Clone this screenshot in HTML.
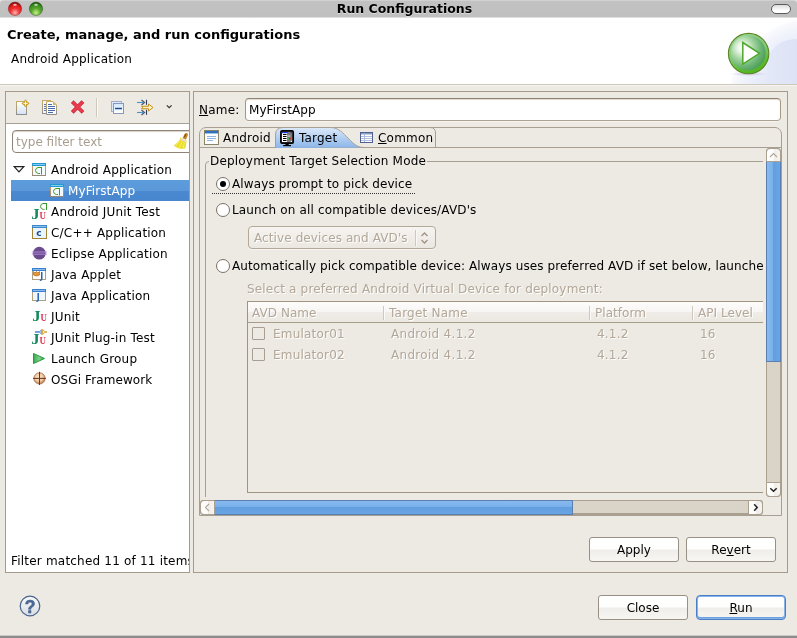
<!DOCTYPE html>
<html><head><meta charset="utf-8"><title>Run Configurations</title>
<style>
html,body{margin:0;padding:0;}
body{width:797px;height:638px;overflow:hidden;background:#ede9e3;font-family:"DejaVu Sans","Liberation Sans",sans-serif;font-size:12px;color:#000;position:relative;letter-spacing:0.2px;}
.abs{position:absolute;}
.t{position:absolute;white-space:nowrap;line-height:16px;height:16px;margin-top:1px;}
#titlebar{left:0;top:0;width:797px;height:17px;background:linear-gradient(#d8d8d8 0,#c2c2c2 1.500px,#c0c0c0 100%);border-bottom:1px solid #dedede;}
#title{left:6px;width:797px;top:0;text-align:center;text-shadow:0 1px 0 #dcdcdc;font-weight:bold;font-size:12.5px;letter-spacing:0;}
#header{left:0;top:18px;width:797px;height:66px;background:#fff;overflow:hidden;}
#hsep{left:0;top:84px;width:797px;height:1px;background:#cfc8ba;border-bottom:1px solid #f6f4f1;}
.panel{position:absolute;border:1px solid #a69b8a;box-sizing:border-box;}
.btn{position:absolute;box-sizing:border-box;border:1px solid #988f85;border-radius:3px;background:linear-gradient(#ffffff 0,#fefefd 46%,#f0eeea 54%,#f7f6f3 100%);letter-spacing:0;text-align:center;line-height:23px;height:25px;padding-top:1px;}
.row{position:absolute;left:11px;width:178px;height:21px;}
.row .t{top:2px;}
u{text-decoration:underline;}
.dis{color:#b2a798;}
.radio{width:14px;height:14px;box-sizing:border-box;border:1px solid #7a7066;border-radius:50%;background:#fff;}
.cb{width:13px;height:13px;box-sizing:border-box;border:1px solid #a89f94;background:#ede9e3;border-radius:1px;}
.vsep{width:1px;height:14px;background:#cfc8bd;border-right:1px solid #fbfaf8;}
.sbtn{box-sizing:border-box;border:1px solid #aba08f;background:linear-gradient(90deg,#fff 0,#fcfbfa 50%,#f0ede9 55%,#f6f4f1 100%);}
#wrap{position:absolute;left:0;top:0;width:797px;height:638px;will-change:transform;}
</style></head><body><div id="wrap">
<!-- title bar -->
<div id="titlebar" class="abs"></div>
<svg class="abs" style="left:0;top:0" width="50" height="18" viewBox="0 0 50 18"><defs>
<radialGradient id="rb" cx=".5" cy=".8" r=".75"><stop offset="0" stop-color="#ffb4b4"/><stop offset=".45" stop-color="#f03434"/><stop offset=".8" stop-color="#d81818"/><stop offset="1" stop-color="#7a0c0c"/></radialGradient>
<radialGradient id="gb" cx=".5" cy=".8" r=".75"><stop offset="0" stop-color="#c8f088"/><stop offset=".45" stop-color="#5aa830"/><stop offset=".8" stop-color="#3a8a20"/><stop offset="1" stop-color="#1c5a0c"/></radialGradient>
<radialGradient id="hl" cx=".5" cy=".5" r=".5"><stop offset="0" stop-color="#fff" stop-opacity=".95"/><stop offset="1" stop-color="#fff" stop-opacity="0"/></radialGradient></defs>
<path d="M0 0h4q-4 0-4 4z" fill="#e4e4e4"/>
<circle cx="15" cy="8.800" r="6.700" fill="url(#rb)" stroke="#7a1010" stroke-opacity=".55" stroke-width=".7"/><ellipse cx="15" cy="4.800" rx="2.600" ry="1.600" fill="url(#hl)"/>
<circle cx="36" cy="8.800" r="6.700" fill="url(#gb)" stroke="#1c4a0c" stroke-opacity=".55" stroke-width=".7"/><ellipse cx="36" cy="4.800" rx="2.600" ry="1.600" fill="url(#hl)"/>
</svg>
<div class="abs" style="left:771px;top:4px;width:20px;height:10px;box-sizing:border-box;border:1px solid #5a5a5a;border-radius:5px;background:linear-gradient(#dcdcdc,#fff 70%);"></div><svg class="abs" style="left:793px;top:0" width="4" height="4" viewBox="0 0 4 4"><path d="M4 0h-4q4 0 4 4z" fill="#e4e4e4"/></svg>
<div id="title" class="t">Run Configurations</div>
<!-- header -->
<div id="header" class="abs">
<svg class="abs" style="left:697px;top:0" width="100" height="66" viewBox="697 18 100 66">
<defs><radialGradient id="hb" gradientUnits="userSpaceOnUse" cx="820" cy="110" r="94"><stop offset="0" stop-color="#e0e6f7"/><stop offset="0.62" stop-color="#e3e8f8"/><stop offset="0.85" stop-color="#eef1fb"/><stop offset="0.97" stop-color="#f8f9fd"/><stop offset="1" stop-color="#fdfdff"/></radialGradient>
<linearGradient id="hb2" gradientUnits="userSpaceOnUse" x1="764" y1="0" x2="797" y2="0"><stop offset="0" stop-color="#e4e9f8"/><stop offset="1" stop-color="#dde3f5"/></linearGradient></defs>
<circle cx="820" cy="110" r="94" fill="url(#hb)"/>
<path d="M797 39L795 39Q769 41 767 66L766 85L797 85Z" fill="url(#hb2)"/>
</svg>
</div>
<svg class="abs" style="left:724px;top:30px" width="50" height="50" viewBox="0 0 50 50">
<defs>
<linearGradient id="rgo" x1="0.2" y1="0" x2="0.6" y2="1"><stop offset="0" stop-color="#9ad890"/><stop offset="0.55" stop-color="#7cc870"/><stop offset="0.8" stop-color="#5cbc30"/><stop offset="1" stop-color="#52b41c"/></linearGradient>
<radialGradient id="rgi" cx="0.33" cy="0.36" r="0.72"><stop offset="0" stop-color="#ffffff"/><stop offset="0.18" stop-color="#eaf6e8"/><stop offset="0.45" stop-color="#a6d6a2"/><stop offset="0.75" stop-color="#6ab474"/><stop offset="1" stop-color="#4e9c58"/></radialGradient>
<radialGradient id="rsh" cx=".5" cy=".5" r=".5"><stop offset="0" stop-color="#a8a0b8" stop-opacity=".6"/><stop offset="1" stop-color="#c8c8e0" stop-opacity="0"/></radialGradient>
</defs>
<ellipse cx="24.500" cy="44" rx="20" ry="2.200" fill="url(#rsh)"/>
<circle cx="24.600" cy="23.600" r="20.200" fill="url(#rgo)" stroke="#5f8428" stroke-width="1.100"/>
<circle cx="24.200" cy="22.800" r="17.400" fill="url(#rgi)"/>
<path d="M18.800 12.500L35.400 23.300L18.800 34.200Z" fill="#fff" stroke="#4ea82c" stroke-width="1.500" stroke-linejoin="miter"/>
</svg>
<div id="hsep" class="abs"></div>
<div class="t" style="left:7px;top:26px;font-weight:bold;font-size:13px;letter-spacing:0">Create, manage, and run configurations</div>
<div class="t" style="left:11px;top:50px;">Android Application</div>
<!-- panels -->
<div class="panel" style="left:5px;top:91px;width:185px;height:482px;background:#fff;"></div>
<div class="panel" style="left:193px;top:91px;width:595px;height:482px;"></div>
<!-- left toolbar -->
<div class="abs" style="left:6px;top:92px;width:183px;height:31px;background:#ede9e3;border-bottom:1px solid #a89f94;"></div>
<div class="abs" style="left:96px;top:98px;width:1px;height:19px;background:#cfc8bd;"></div>
<div class="abs" style="left:97px;top:98px;width:1px;height:19px;background:#fbfaf8;"></div>
<svg class="abs" style="left:10px;top:94px" width="50" height="26" viewBox="10 94 50 26"><!-- new + copy -->
<defs><linearGradient id="pg" x1="0" y1="0" x2="0" y2="1"><stop offset="0" stop-color="#ffffff"/><stop offset="1" stop-color="#d4e2f6"/></linearGradient>
<linearGradient id="pb" x1="0" y1="0" x2="0" y2="1"><stop offset="0" stop-color="#c8ac64"/><stop offset="1" stop-color="#8e8e8e"/></linearGradient></defs>
<rect x="16.500" y="101.500" width="10" height="13" fill="url(#pg)" stroke="url(#pb)"/>
<path d="M25.500 99.800L27 102 29.200 103.400 27 104.900 25.500 107 24 104.900 21.800 103.400 24 102Z" fill="#d0a828" stroke="#b88c14" stroke-width=".6"/>
<path d="M25.500 101.200v4.400M23.300 103.400h4.400" stroke="#fff8d8" stroke-width="1"/>
<rect x="42.500" y="100.500" width="8" height="13" fill="#f4f6fb" stroke="url(#pb)"/>
<path d="M44 104.500h3M44 106.500h3M44 108.500h3M44 110.500h3" stroke="#5a78b0" stroke-width="1"/>
<path d="M46.500 101.500h6.500l3.500 3.500v9.500h-10z" fill="#fbfcfe" stroke="url(#pb)"/>
<path d="M53 101.500v3.500h3.500z" fill="#d8b460"/>
<path d="M48 104.500h4M48 106.500h7M48 108.500h7M48 110.500h7M48 112.500h5" stroke="#4a6aa8" stroke-width="1"/>
</svg>
<svg class="abs" style="left:68px;top:97px" width="20" height="20" viewBox="68 97 20 20"><!-- delete -->
<path d="M73.600 103l8 8M81.600 103l-8 8" stroke="#c8202e" stroke-width="3.800" stroke-linecap="square"/>
<path d="M73.600 103l8 8M81.600 103l-8 8" stroke="#ea3c4e" stroke-width="2.500" stroke-linecap="square"/></svg>
<svg class="abs" style="left:106px;top:94px" width="70" height="26" viewBox="106 94 70 26"><!-- collapse, filter, chevron -->
<defs><linearGradient id="cg" x1="0" y1="0" x2="0" y2="1"><stop offset="0" stop-color="#d2e8fb"/><stop offset="1" stop-color="#ffffff"/></linearGradient></defs>
<rect x="111.500" y="101.500" width="10" height="10" fill="#dbeafb" stroke="#a4aecc"/>
<rect x="113.500" y="103.500" width="10" height="10" fill="url(#cg)" stroke="#8c96b8"/>
<path d="M115 108.500h7" stroke="#1c4a8c" stroke-width="1.500"/>
<path d="M137 102.500h6" stroke="#4a94cc" stroke-width="1.100"/><path d="M141.500 100l3 2.500-3 2.500" stroke="#4a5668" stroke-width="1.200" fill="none"/><path d="M146.500 99.800v5" stroke="#2c3c5c" stroke-width="1.100"/>
<path d="M137 112.500h6" stroke="#4a94cc" stroke-width="1.100"/><path d="M141.500 110l3 2.500-3 2.500" stroke="#4a5668" stroke-width="1.200" fill="none"/><path d="M146.500 109.800v5" stroke="#2c3c5c" stroke-width="1.100"/>
<path d="M141.500 106.300h7v-2.300l4.500 3.500-4.500 3.500v-2.300h-7l1.500-1.200z" fill="#fff4c8" stroke="#c8901c" stroke-width="1" stroke-linejoin="round"/>
<path d="M166.800 105.400l2.400 2.300 2.400-2.300" stroke="#333" stroke-width="1.200" fill="none"/>
</svg>
<!-- filter box -->
<div class="abs" style="left:11px;top:129px;width:178px;height:25px;overflow:hidden;">
<div class="abs" style="left:1px;top:1px;width:190px;height:23px;box-sizing:border-box;border:1px solid #8f8475;border-radius:4px;background:#fff;box-shadow:inset 0 1px 1px #d8d2ca;"></div>
<div class="t" style="left:5px;top:4px;color:#a89e90;letter-spacing:0">type filter text</div>
<svg class="abs" style="left:155px;top:-3px" width="28" height="30" viewBox="166 126 28 30"><path d="M184.400 134.200Q185.800 132.400 187.400 133.300Q188.400 134.300 187.800 135.600L185.900 139.800L182.500 138.200Z" fill="#c88a2a"/><path d="M185.600 134.500l-1 2.200" stroke="#7a4c10" stroke-width="1.100" stroke-linecap="round"/><path d="M180 137.200L181.200 138.600L186 140.800L187 140.400L186.400 142.200L185.400 148.200Q182 149.400 178.400 148.200Q175.600 147 173.800 145.400Q177.500 143 180 139.600Z" fill="#eade2c"/><path d="M179.500 141l-3.500 4M182 142l-2.500 5.500M184.300 142.800l-1.300 5.500" stroke="#f8f27a" stroke-width=".8" fill="none"/><path d="M180.600 139.400L186.200 141.900" stroke="#e8d6e4" stroke-width="1.500"/></svg>
</div>
<!-- tree -->
<div class="row" style="top:159px"><svg class="abs" style="left:1px;top:6px" width="14" height="9" viewBox="0 0 14 9"><path d="M2.200 1.600h9.600l-4.800 5.200z" fill="#fff" stroke="#222" stroke-width="1.200" stroke-linejoin="miter"/></svg>
<svg class="abs" style="left:21px;top:4px" width="14" height="13" viewBox="0 0 14 13"><use href="#andicon"/></svg><div class="t" style="left:40px">Android Application</div></div>
<div class="row" style="top:180px;background:linear-gradient(#5c9bdc 0,#5a98da 50%,#4a88cf 55%,#4886ce 100%);color:#fff"><svg class="abs" style="left:39px;top:4px" width="14" height="13" viewBox="0 0 14 13"><use href="#andicon"/></svg><div class="t" style="left:57px;letter-spacing:0.1px">MyFirstApp</div></div>
<div class="row" style="top:201px"><svg class="abs" style="left:20px;top:0px" width="18" height="21" viewBox="0 0 18 21"><use href="#juicon" y="-2.200"/><path d="M15.500 2v7M15.500 2.500h-3.500q-2.500 .5-2.500 3t3 3h1" fill="none" stroke="#3a9a30" stroke-width="1"/></svg><div class="t" style="left:40px">Android JUnit Test</div></div>
<div class="row" style="top:222px"><svg class="abs" style="left:21px;top:3px" width="15" height="14" viewBox="0 0 15 14"><rect x=".5" y=".5" width="14" height="13" fill="#eaf4fd" stroke="#a08438"/><rect x="0" y="0" width="15" height="3" fill="#3a88d0"/><rect x="1" y="1" width="13" height="1" fill="#8cc0ec"/><text x="4.300" y="11.200" font-size="9" font-weight="bold" fill="#1c4a8c" font-family="DejaVu Sans,sans-serif" letter-spacing="0">c</text></svg><div class="t" style="left:40px">C/C++ Application</div></div>
<div class="row" style="top:243px"><svg class="abs" style="left:20px;top:3px" width="17" height="15" viewBox="-1 0 17 15"><circle cx="7.300" cy="7.200" r="6.400" fill="#6a4a8c"/><path d="M-.2 6h15.200M-.2 8.200h15.200" stroke="#b690e0" stroke-width=".9"/></svg><div class="t" style="left:40px">Eclipse Application</div></div>
<div class="row" style="top:264px"><svg class="abs" style="left:21px;top:4px" width="15" height="13" viewBox="0 0 15 13"><rect x=".5" y=".5" width="13" height="11" fill="#fff" stroke="#b0a080"/><rect x="0" y="0" width="14" height="3" fill="#3a80d0"/><rect x="1" y="1" width="12" height="1" fill="#8cb8ec"/><path d="M1.500 3.500l1.500 1.500 1.500-1.500 1.500 1.500 1.500-1.500v3.500q-3 2-6 0z" fill="#e89838" stroke="#a05c10" stroke-width=".6"/><text x="8.200" y="10.500" font-size="8" font-weight="bold" fill="#2a64b8" font-family="DejaVu Sans,sans-serif" letter-spacing="0">J</text></svg><div class="t" style="left:40px">Java Applet</div></div>
<div class="row" style="top:285px"><svg class="abs" style="left:21px;top:4px" width="15" height="13" viewBox="0 0 15 13"><rect x=".5" y=".5" width="13" height="11" fill="#f0f6fd" stroke="#b0a080"/><rect x="0" y="0" width="14" height="3" fill="#3a80d0"/><rect x="1" y="1" width="12" height="1" fill="#8cb8ec"/><text x="4.800" y="10.500" font-size="8" font-weight="bold" fill="#2a64b8" font-family="DejaVu Sans,sans-serif" letter-spacing="0">J</text></svg><div class="t" style="left:40px">Java Application</div></div>
<div class="row" style="top:306px"><svg class="abs" style="left:20px;top:0px" width="18" height="21" viewBox="0 0 18 21"><use href="#juicon" x="1" y="-5"/></svg><div class="t" style="left:40px">JUnit</div></div>
<div class="row" style="top:327px"><svg class="abs" style="left:20px;top:0px" width="18" height="21" viewBox="0 0 18 21"><use href="#juicon" y="-3.100"/><path d="M4 5h4.500" stroke="#3a6ad0" stroke-width="1.300"/><path d="M10.500 2.500v5l-2.500-2.500z" fill="#a8c4e8" stroke="#5a84c8" stroke-width=".6"/><path d="M11.500 2.500l3 2.500-3 2.500z" fill="#fff0b0" stroke="#d09820" stroke-width=".8"/><rect x="14.500" y="4.300" width="1.300" height="1.500" fill="#b87818"/></svg><div class="t" style="left:40px">JUnit Plug-in Test</div></div>
<div class="row" style="top:348px"><svg class="abs" style="left:21px;top:4px" width="15" height="14" viewBox="0 0 15 14"><defs><linearGradient id="lg" x1="0" x2="1"><stop offset="0" stop-color="#3aa850"/><stop offset=".5" stop-color="#7cd088"/><stop offset="1" stop-color="#3aa850"/></linearGradient></defs><path d="M1.500 1.500l11 5-11 5z" fill="url(#lg)" stroke="#2a9a40" stroke-width="1" stroke-linejoin="round"/></svg><div class="t" style="left:40px">Launch Group</div></div>
<div class="row" style="top:369px"><svg class="abs" style="left:21px;top:2px" width="15" height="15" viewBox="0 0 15 15"><defs><radialGradient id="og" cx=".45" cy=".4" r=".6"><stop offset="0" stop-color="#fde8d0"/><stop offset=".6" stop-color="#f0c8a0"/><stop offset="1" stop-color="#b87850"/></radialGradient></defs><circle cx="7.500" cy="7.400" r="5.600" fill="url(#og)" stroke="#a86840" stroke-width=".8"/><path d="M7.500 .8v13.200M1 7.400h13" stroke="#6a3420" stroke-width="1"/></svg><div class="t" style="left:40px;letter-spacing:0.1px">OSGi Framework</div></div>
<div class="abs" style="left:6px;top:550px;width:183px;height:20px;overflow:hidden"><div class="t" style="left:5px;top:2px">Filter matched 11 of 11 items</div></div>
<svg width="0" height="0" style="position:absolute"><defs>
<linearGradient id="ab" x1="0" y1="0" x2="0" y2="1"><stop offset="0" stop-color="#d8a060"/><stop offset="1" stop-color="#988878"/></linearGradient>
<g id="andicon"><rect x=".5" y=".5" width="13" height="12" fill="#f2fbfe" stroke="url(#ab)"/><rect x="0" y="0" width="14" height="3" fill="#2498d2"/><rect x="1" y="1" width="12" height="1" fill="#80ccee"/><path d="M9.500 4v7.500M9.500 4.500h-3.500q-2.500 .5-2.500 3t3 3h1.500" fill="none" stroke="#4a9a20" stroke-width="1"/></g>
<g id="juicon"><text x="0.300" y="20" font-family="Liberation Serif,serif" font-weight="bold" font-size="14.500" textLength="8.600" lengthAdjust="spacingAndGlyphs" fill="#168a5c">J</text><text x="8.500" y="20.300" font-family="Liberation Serif,serif" font-weight="bold" font-size="11" textLength="6.600" lengthAdjust="spacingAndGlyphs" fill="#e03450">U</text></g>
</defs></svg>
<!-- RIGHTPANEL -->
<div class="t" style="left:199px;top:101px"><u>N</u>ame:</div>
<div class="abs" style="left:245px;top:98px;width:536px;height:23px;box-sizing:border-box;border:1px solid;border-color:#8f8273 #a59986 #ada291 #a59986;border-radius:4px;background:#fff;box-shadow:inset 0 1px 1px #e0dbd4,0 1px 0 #f6f4f1;"></div>
<div class="t" style="left:249px;top:101px;letter-spacing:0.05px">MyFirstApp</div>
<!-- tab folder -->
<div class="abs" style="left:199px;top:127px;width:583px;height:389px;box-sizing:border-box;border:1px solid #a89f94;border-radius:7px 7px 0 0;"></div>
<div class="abs" style="left:200px;top:147px;width:581px;height:1px;background:#a89f94;"></div>
<svg class="abs" style="left:270px;top:127px" width="170" height="21" viewBox="0 0 170 21">
<defs><linearGradient id="tg" x1="0" y1="0" x2="0" y2="1"><stop offset="0" stop-color="#dce9fa"/><stop offset="1" stop-color="#8ab5e9"/></linearGradient></defs>
<path d="M5.500 21V8Q5.500 .5 13 .5H60.500C67 .5 71 4 76.500 9.500S86 20.500 94 20.500z" fill="url(#tg)"/>
<path d="M5.500 21V8Q5.500 .5 13 .5H60.500C67 .5 71 4 76.500 9.500S86 20.500 94 20.500" fill="none" stroke="#a89f94" stroke-width="1"/>
<path d="M160 .5q5.500 0 5.500 5.500v14.500" fill="none" stroke="#a89f94" stroke-width="1"/>
</svg>
<svg class="abs" style="left:204px;top:130px" width="16" height="15" viewBox="0 0 16 15"><rect x=".5" y=".5" width="14" height="14" fill="#fdfdfd" stroke="#8a8468"/><rect x="1" y="1" width="13" height="2" fill="#2f6fc0"/><rect x="1" y="3" width="13" height="1" fill="#9cc0e8"/><path d="M3 6.500h9M3 8.500h9M3 10.500h6" stroke="#8fb4e0" stroke-width="1"/></svg>
<div class="t" style="left:223px;top:129px">Android</div>
<svg class="abs" style="left:279px;top:129px" width="16" height="18" viewBox="279 129 16 18"><rect x="280.900" y="130.900" width="12.300" height="12.200" rx="1.200" fill="#7a7a7a" stroke="#000" stroke-width="1.700"/><rect x="282" y="132" width="5" height="10" fill="#fff"/><rect x="282" y="132" width="5.500" height="1.200" fill="#1838e0"/><rect x="290.600" y="132" width="1.300" height="1.200" fill="#1838e0"/><path d="M283 134.500h3.500M283 136.500h3.500M283 138.500h3.500M283 140.500h3.500" stroke="#000" stroke-width="1"/><rect x="287.300" y="135.200" width="3" height="1.800" fill="#b4b4b4"/><rect x="287.100" y="137.800" width="1.600" height="1.600" fill="#10e030"/><rect x="289.200" y="137.800" width="1.600" height="1.600" fill="#f01010"/><rect x="290.800" y="140.800" width="1.200" height="1.200" fill="#fff"/><rect x="285.500" y="143.500" width="3.200" height="2" fill="#000"/><rect x="283.200" y="145" width="7.800" height="1.200" fill="#000"/></svg>
<div class="t" style="left:299px;top:129px">Target</div>
<svg class="abs" style="left:359px;top:131px" width="15" height="13" viewBox="359 131 15 13"><rect x="360.500" y="132.500" width="12" height="10" fill="#fff" stroke="#4f5f8f"/><rect x="361" y="133" width="11" height="1.500" fill="#8a9ac0"/><path d="M361 136.500h11M361 138.500h11M361 140.500h11M364.500 133v9" stroke="#a8b8d8" stroke-width=".9"/></svg>
<div class="t" style="left:378px;top:129px"><u>C</u>ommon</div>
<!-- scrolled content -->
<div class="abs" style="left:200px;top:148px;width:563px;height:349px;overflow:hidden;">
 <div class="abs" style="left:5px;top:13px;width:700px;height:420px;box-sizing:border-box;border:1px solid #a89f94;border-radius:4px;"></div>
 <div class="t" style="left:9px;top:4px;background:#ede9e3;padding:0 1px;letter-spacing:0.19px">Deployment Target Selection Mode</div>
 <div class="abs radio" style="left:16px;top:29px"></div><div class="abs" style="left:20px;top:33px;width:6px;height:6px;border-radius:50%;background:#000"></div>
 <div class="t" style="left:32px;top:27px;letter-spacing:0.12px">Always prompt to pick device</div>
 <div class="abs" style="left:12px;top:45px;width:203px;height:0;border-top:1px dotted #333;"></div>
 <div class="abs radio" style="left:16px;top:55px"></div>
 <div class="t" style="left:32px;top:53px;letter-spacing:0.15px">Launch on all compatible devices/AVD's</div>
 <div class="abs" style="left:48px;top:78px;width:188px;height:23px;box-sizing:border-box;border:1px solid #b3a999;border-radius:4px;background:linear-gradient(#f6f4f1,#ebe7e1);box-shadow:0 1px 0 #f8f6f3;"></div>
 <div class="t dis" style="left:54px;top:81px;letter-spacing:0.1px;text-shadow:1px 1px 0 #fff">Active devices and AVD's</div>
 <div class="abs" style="left:215px;top:82px;width:1px;height:16px;background:#cfc8bd;border-right:1px solid #faf8f5"></div>
 <svg class="abs" style="left:220px;top:83px" width="9" height="14" viewBox="0 0 9 14"><path d="M1.500 5l3-3 3 3M1.500 9l3 3 3-3" fill="none" stroke="#9c9284" stroke-width="1.300"/></svg>
 <div class="abs radio" style="left:16px;top:111px"></div>
 <div class="t" style="left:32px;top:109px;letter-spacing:0.11px">Automatically pick compatible device: Always uses preferred AVD if set below, launches on compatible device/AVD otherwise.</div>
 <div class="t dis" style="left:47px;top:132px;letter-spacing:0.18px;text-shadow:1px 1px 0 #fff">Select a preferred Android Virtual Device for deployment:</div>
 <div class="abs" style="left:47px;top:153px;width:600px;height:192px;box-sizing:border-box;border:1px solid #a09482;"></div>
 <div class="abs" style="left:48px;top:154px;width:600px;height:20px;background:linear-gradient(#fdfcfb 0,#f8f6f4 48%,#f0ede8 52%,#ebe7e1 100%);border-bottom:1px solid #a89c8a;"></div>
 <div class="t dis" style="left:52px;top:156px;letter-spacing:0.05px;text-shadow:1px 1px 0 #fff">AVD Name</div>
 <div class="t dis" style="left:189px;top:156px;letter-spacing:0.22px;text-shadow:1px 1px 0 #fff">Target Name</div>
 <div class="t dis" style="left:395px;top:156px;letter-spacing:0.05px;text-shadow:1px 1px 0 #fff">Platform</div>
 <div class="t dis" style="left:498px;top:156px;letter-spacing:0.05px;text-shadow:1px 1px 0 #fff">API Level</div>
 <div class="abs vsep" style="left:183px;top:158px"></div><div class="abs vsep" style="left:389px;top:158px"></div><div class="abs vsep" style="left:492px;top:158px"></div>
 <div class="abs cb" style="left:52px;top:179px"></div><div class="t dis" style="left:73px;top:177px;text-shadow:1px 1px 0 #fff">Emulator01</div><div class="t dis" style="left:191px;top:177px;letter-spacing:0.3px;text-shadow:1px 1px 0 #fff">Android 4.1.2</div><div class="t dis" style="left:397px;top:177px;text-shadow:1px 1px 0 #fff">4.1.2</div><div class="t dis" style="left:500px;top:177px;text-shadow:1px 1px 0 #fff">16</div>
 <div class="abs cb" style="left:52px;top:200px"></div><div class="t dis" style="left:73px;top:198px;text-shadow:1px 1px 0 #fff">Emulator02</div><div class="t dis" style="left:191px;top:198px;letter-spacing:0.3px;text-shadow:1px 1px 0 #fff">Android 4.1.2</div><div class="t dis" style="left:397px;top:198px;text-shadow:1px 1px 0 #fff">4.1.2</div><div class="t dis" style="left:500px;top:198px;text-shadow:1px 1px 0 #fff">16</div>
</div>
<!-- vertical scrollbar -->
<div class="abs" style="left:766px;top:148px;width:15px;height:349px;box-sizing:border-box;background:#dad3c8;border:1px solid #aba08f;border-radius:3px;"></div>
<div class="abs" style="left:766px;top:161px;width:15px;height:201px;box-sizing:border-box;border:1px solid #5a7fae;background:linear-gradient(90deg,#86baf0 0,#7ab0ea 45%,#629fe0 50%,#6aa5e4 100%);"></div>
<div class="abs sbtn" style="left:766px;top:148px;width:15px;height:14px;border-radius:4px 4px 0 0;"></div>
<svg class="abs" style="left:769px;top:152px" width="9" height="6" viewBox="0 0 9 6"><path d="M1 5l3.500-3.500 3.500 3.500" fill="none" stroke="#b0a698" stroke-width="1.100"/></svg>
<div class="abs sbtn" style="left:766px;top:482px;width:15px;height:15px;border-radius:0 0 4px 4px;"></div>
<svg class="abs" style="left:769px;top:487px" width="9" height="6" viewBox="0 0 9 6"><path d="M1.300 1.200l3.200 3 3.200-3" fill="none" stroke="#222" stroke-width="1.500"/></svg>
<!-- horizontal scrollbar -->
<div class="abs" style="left:200px;top:500px;width:563px;height:15px;box-sizing:border-box;background:#dad3c8;border:1px solid #aba08f;border-bottom:2px solid #aba08f;border-radius:3px;"></div>
<div class="abs" style="left:214px;top:500px;width:359px;height:15px;box-sizing:border-box;border:1px solid #5a7fae;background:linear-gradient(#86baf0 0,#7ab0ea 45%,#629fe0 50%,#6aa5e4 100%);"></div>
<div class="abs sbtn" style="left:200px;top:500px;width:15px;height:15px;border-radius:4px 0 0 4px;"></div>
<svg class="abs" style="left:204px;top:503px" width="6" height="9" viewBox="0 0 6 9"><path d="M5 1l-3.500 3.500 3.500 3.500" fill="none" stroke="#b0a698" stroke-width="1.100"/></svg>
<div class="abs sbtn" style="left:748px;top:500px;width:15px;height:15px;border-radius:0 4px 4px 0;"></div>
<svg class="abs" style="left:753px;top:503px" width="6" height="9" viewBox="0 0 6 9"><path d="M1.200 1.300l3 3.200-3 3.200" fill="none" stroke="#222" stroke-width="1.500"/></svg>
<!-- buttons -->
<div class="btn" style="left:589px;top:537px;width:90px;">Apply</div>
<div class="btn" style="left:686px;top:537px;width:90px;">Re<u>v</u>ert</div>
<!-- BOTTOM -->
<div class="btn" style="left:598px;top:595px;width:90px;">Close</div>
<div class="btn" style="left:696px;top:595px;width:90px;height:25px;border:1px solid #4a7fc6;line-height:23px;border-radius:4px;box-shadow:inset 0 0 0 1px #86b4ea,inset 0 -1px 0 1px #6a9fe0"><u>R</u>un</div>
<svg class="abs" style="left:19px;top:595px" width="22" height="22" viewBox="0 0 22 22"><defs><linearGradient id="hg" x1="0" y1="0" x2="0" y2="1"><stop offset="0" stop-color="#fafafa"/><stop offset="1" stop-color="#d8dce2"/></linearGradient></defs><circle cx="11" cy="11" r="9.800" fill="url(#hg)" stroke="#46628e" stroke-width="1.200"/><text x="11.100" y="17.500" text-anchor="middle" font-family="Liberation Sans,sans-serif" font-weight="bold" font-size="17.500" fill="#4a6692" stroke="#4a6692" stroke-width=".5">?</text></svg>
<div class="abs" style="left:0;top:635px;width:797px;height:1px;background:#cbc8c3;"></div><div class="abs" style="left:0;top:636px;width:797px;height:2px;background:#8c8c8c;"></div>
</div></body></html>
